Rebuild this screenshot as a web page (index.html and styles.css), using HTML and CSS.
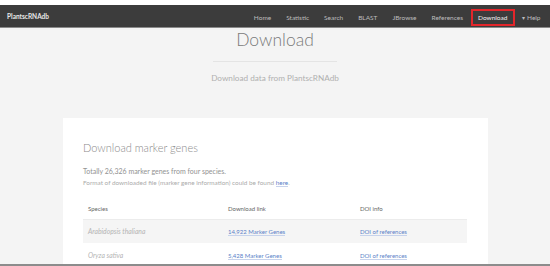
FILE: index.html
```html
<!DOCTYPE html>
<html lang="en">
  <head>
    <meta charset="UTF-8" />
    <title>PlantscRNAdb - Download</title>
    <link rel="stylesheet" href="styles.css">
  </head>
  <body>
    <!-- Top navigation -->
    <div class="navbar">
      <div class="brand">PlantscRNAdb</div>
      <ul class="nav">
        <li><a href="#">Home</a></li>
        <li><a href="#">Statistic</a></li>
        <li><a href="#">Search</a></li>
        <li><a href="#">BLAST</a></li>
        <li><a href="#">JBrowse</a></li>
        <li><a href="#">References</a></li>
        <li class="active"><a href="#">Download</a></li>
        <li><a href="#"><span class="caret">&#9662;</span> Help</a></li>
      </ul>
    </div>

    <!-- Page content -->
    <div class="page">
      <div class="page-header">
        <h1>Download</h1>
        <hr>
        <p>Download data from PlantscRNAdb</p>
      </div>

      <div class="card">
        <h2>Download marker genes</h2>
        <p class="lead">Totally 26,326 marker genes from four species.</p>
        <p class="note">Format of downloaded file (marker gene information) could be found <a href="#">here</a>.</p>

        <table class="data-table">
          <thead>
            <tr>
              <th>Species</th>
              <th>Download link</th>
              <th>DOI info</th>
            </tr>
          </thead>
          <tbody>
            <tr>
              <td class="species">Arabidopsis thaliana</td>
              <td><a href="#">14,922 Marker Genes</a></td>
              <td><a href="#">DOI of references</a></td>
            </tr>
            <tr>
              <td class="species">Oryza sativa</td>
              <td><a href="#">5,428 Marker Genes</a></td>
              <td><a href="#">DOI of references</a></td>
            </tr>
          </tbody>
        </table>
      </div>
    </div>
  </body>
</html>
```

FILE: styles.css
```css
/* --- Reset --- */
* {
  margin: 0;
  padding: 0;
  box-sizing: border-box;
}

body {
  font-family: Lato, "Open Sans", sans-serif;
  background-color: #fff;
  height: 100vh;
  overflow: hidden;
  padding-top: 5px;
  display: flex;
  flex-direction: column;
}

/* --- Navbar --- */
.navbar {
  height: 23px;
  background-color: #3c3c3c;
  border-bottom: 1px solid #8a8a8a;
  display: flex;
  align-items: center;
  justify-content: space-between;
  padding: 0 2px 0 7px;
}
.brand {
  color: #e8e8e8;
  font-size: 6.5px;
  font-weight: bold;
}
.nav {
  list-style: none;
  display: flex;
  align-items: center;
  height: 100%;
  padding-top: 2px;
}
.nav li a {
  display: block;
  color: #bdbdbd;
  text-decoration: none;
  font-size: 6.5px;
  line-height: 9px;
  padding: 2px 5.5px;
  border: 2px solid transparent;
}
.nav li.active a {
  color: #f2f2f2;
  border-color: #e3262b;
}
.caret {
  font-size: 6px;
}

/* --- Page --- */
.page {
  flex: 1;
  background-color: #f4f4f4;
  border-bottom: 2px solid #8c8c8c;
  overflow: hidden;
}
.page-header {
  text-align: center;
  height: 89px;
}
.page-header h1 {
  font-size: 17.5px;
  font-weight: 300;
  color: #7a7a7a;
  line-height: 22px;
  margin-top: 1px;
}
.page-header hr {
  width: 124px;
  margin: 10px auto 0;
  border: 0;
  border-top: 1px solid #e4e4e4;
}
.page-header p {
  font-size: 8.2px;
  color: #b0b0b0;
  margin-top: 11px;
}

/* --- Card --- */
.card {
  background-color: #fff;
  margin: 0 62px 0 63px;
  padding: 22px 21px 0 20px;
  height: 200px;
}
.card h2 {
  font-size: 11px;
  font-weight: 300;
  color: #8a8a8a;
  line-height: 16px;
}
.card .lead {
  font-size: 7px;
  color: #929292;
  margin-top: 11px;
}
.card .note {
  font-size: 6.4px;
  color: #ababab;
  margin-top: 4px;
}
.card a {
  color: #5a7fc8;
  text-decoration: none;
  border-bottom: 1px solid #c7d3ec;
}

/* --- Table --- */
.data-table {
  width: 100%;
  border-collapse: collapse;
  margin-top: 12px;
  font-size: 6px;
}
.data-table th {
  text-align: left;
  font-weight: normal;
  color: #666;
  height: 21px;
  padding: 0 5px;
  border-bottom: 1px solid #ececec;
}
.data-table th:nth-child(1) { width: 140px; }
.data-table th:nth-child(2) { width: 132px; }
.data-table td {
  height: 24px;
  padding: 0 5px;
  color: #999;
}
.data-table tbody tr:nth-child(odd) {
  background-color: #f5f5f5;
}
.data-table td.species {
  font-style: italic;
  font-size: 6.8px;
  color: #b4b4b4;
}
```
